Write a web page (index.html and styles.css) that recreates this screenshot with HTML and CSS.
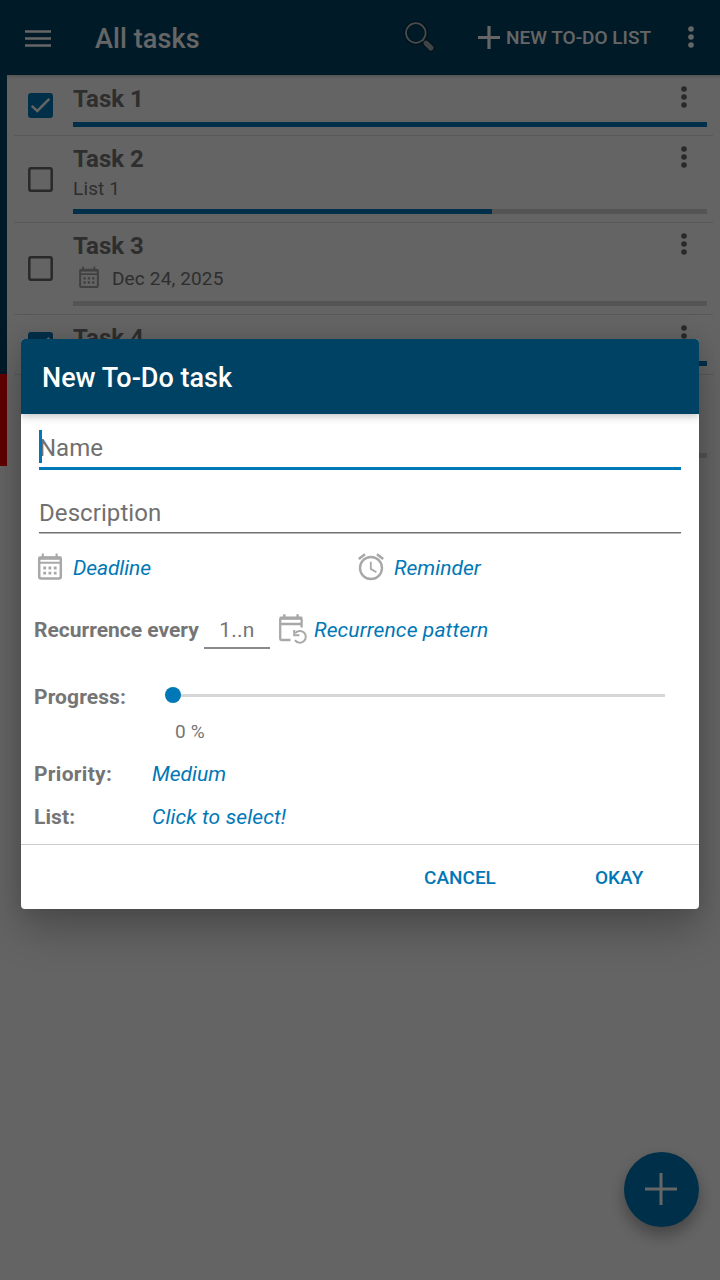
FILE: index.html
```
<!DOCTYPE html>
<html lang="en">
<head>
<meta charset="utf-8">
<title>All tasks</title>
<link rel="stylesheet" href="styles.css">
</head>
<body>
<svg class="defs" width="0" height="0">
  <symbol id="calendar" viewBox="0 0 26 28">
    <rect x="2.2" y="4.6" width="21.6" height="21" rx="2" fill="none" stroke="currentColor" stroke-width="2.5"/>
    <path d="M2 9.8h22M5.8 .5v4M19.6 .5v4" fill="none" stroke="currentColor" stroke-width="2.1"/>
    <path d="M1.5 3.6h23v3.2h-23z" fill="currentColor"/>
    <path d="M6.3 13.6h2.8v2.8H6.3zM11.5 13.6h2.8v2.8h-2.8zM16.8 13.6h2.8v2.8h-2.8zM6.3 18.7h2.8v2.8H6.3zM11.5 18.7h2.8v2.8h-2.8zM16.8 18.7h2.8v2.8h-2.8z" fill="currentColor"/>
  </symbol>
  <symbol id="dots" viewBox="0 0 6 22">
    <circle cx="3" cy="3" r="2.8"/><circle cx="3" cy="11" r="2.8"/><circle cx="3" cy="19" r="2.8"/>
  </symbol>
  <symbol id="checked" viewBox="0 0 25 25">
    <rect width="25" height="25" rx="3" fill="#0077b6"/>
    <path d="M3.7 12.8l5.6 5.2L21.3 5.8" fill="none" stroke="#fafafa" stroke-width="2.5"/>
  </symbol>
  <symbol id="unchecked" viewBox="0 0 25 25">
    <rect x="1.3" y="1.3" width="22.4" height="22.4" rx="1.7" fill="none" stroke="#666" stroke-width="2.5"/>
  </symbol>
</svg>
<div class="screen">
  <header class="appbar">
    <svg class="menu" width="26" height="17" viewBox="0 0 26 17"><path d="M0 1.4h26M0 8.4h26M0 15.4h26" stroke="#fff" stroke-width="2.5"/></svg>
    <h1 class="title">All tasks</h1>
    <svg class="search" width="32" height="32" viewBox="0 0 32 32">
      <circle cx="11.8" cy="12" r="10" fill="none" stroke="#002b40" stroke-width="4"/>
      <circle cx="11.8" cy="12" r="9.8" fill="none" stroke="#b4bcc0" stroke-width="1.8"/>
      <path d="M18.7 18.7l3 3" stroke="#b4bcc0" stroke-width="2"/>
      <path d="M22 22.2l5 4.8" stroke="#002b40" stroke-width="7" stroke-linecap="round"/>
      <path d="M22 22.2l5 4.8" stroke="#9eaab0" stroke-width="5.2" stroke-linecap="round"/>
    </svg>
    <svg class="plus" width="22" height="23" viewBox="0 0 22 23"><path d="M0 11.5h22M11 0v23" stroke="#fff" stroke-width="3.2"/></svg>
    <span class="newlist">NEW TO-DO LIST</span>
    <svg class="overflow" width="6" height="22" fill="#fff"><use href="#dots"/></svg>
  </header>
  <main class="body">
    <div class="strip"><div class="strip-normal"></div><div class="strip-due"></div></div>
    <div class="list">
      <section class="row row-1">
        <svg class="box" width="25" height="25"><use href="#checked"/></svg>
        <div class="info"><div class="name">Task 1</div><div class="bar"><div class="fill" style="width:100%"></div></div></div>
        <svg class="more" width="6" height="22" fill="#666"><use href="#dots"/></svg>
      </section>
      <section class="row row-2">
        <svg class="box" width="25" height="25"><use href="#unchecked"/></svg>
        <div class="info"><div class="name">Task 2</div><div class="sub">List 1</div><div class="bar"><div class="fill" style="width:66.1%"></div></div></div>
        <svg class="more" width="6" height="22" fill="#666"><use href="#dots"/></svg>
      </section>
      <section class="row row-3">
        <svg class="box" width="25" height="25"><use href="#unchecked"/></svg>
        <div class="info"><div class="name">Task 3</div><div class="date"><svg width="22" height="23"><use href="#calendar"/></svg><span>Dec 24, 2025</span></div><div class="bar"></div></div>
        <svg class="more" width="6" height="22" fill="#666"><use href="#dots"/></svg>
      </section>
      <section class="row row-4">
        <svg class="box" width="25" height="25"><use href="#checked"/></svg>
        <div class="info"><div class="name">Task 4</div><div class="bar"><div class="fill" style="width:100%"></div></div></div>
        <svg class="more" width="6" height="22" fill="#666"><use href="#dots"/></svg>
      </section>
      <section class="row row-5">
        <div class="info"><div class="bar"></div></div>
      </section>
    </div>
  </main>
  <div class="fab"><svg width="32" height="32" viewBox="0 0 32 32"><path d="M0 16h32M16 0v32" stroke="#fff" stroke-width="3"/></svg></div>
</div>
<div class="scrim">
  <div class="dialog">
    <h2 class="dialog-title">New To-Do task</h2>
    <div class="form">
      <div class="field field-name"><i class="caret"></i><span>Name</span></div>
      <div class="field field-desc"><span>Description</span></div>
      <div class="dates">
        <div class="pick"><svg width="26" height="28"><use href="#calendar"/></svg><a class="deadline">Deadline</a></div>
        <div class="pick">
          <svg width="26" height="28" viewBox="0 0 26 28" fill="none" stroke="currentColor"><circle cx="13" cy="15" r="11" stroke-width="2.4"/><path d="M12.8 8.7v7.2l5.6 3.3" stroke-width="1.8"/><path d="M.8 6l6.2-4.8M25.2 6L19 1.2" stroke-width="2.6"/></svg>
          <a>Reminder</a>
        </div>
      </div>
      <div class="recur">
        <b class="label every">Recurrence every</b>
        <span class="count">1..n</span>
        <svg width="29" height="30" viewBox="0 0 29 30" fill="none" stroke="currentColor"><path d="M12.5 26H3.4q-1.2 0-1.2-1.2V5.2q0-1.2 1.2-1.2h19q1.2 0 1.2 1.2V13.5M2.2 10h21.4" stroke-width="2.3"/><path d="M1.8 4.2h22.4" stroke-width="3.2"/><path d="M6.3 .3v4M19.6 .3v4" stroke-width="2.4"/><path d="M17.2 19.2a5.9 5.9 0 1 1-.2 6.9" stroke-width="2"/><path d="M16.2 16v5.2h5.2" stroke-width="2"/></svg>
        <a class="pattern">Recurrence pattern</a>
      </div>
      <div class="line line-progress"><b class="label">Progress:</b><div class="slider"><i class="thumb"></i></div></div>
      <div class="percent">0 %</div>
      <div class="line line-priority"><b class="label">Priority:</b><a>Medium</a></div>
      <div class="line line-list"><b class="label">List:</b><a class="pattern">Click to select!</a></div>
    </div>
    <footer class="actions"><span class="cancel">CANCEL</span><span class="okay">OKAY</span></footer>
  </div>
</div>
</body>
</html>
```
FILE: styles.css
```
* { box-sizing: border-box; }
html, body { margin: 0; height: 1280px; overflow: hidden; }
body { position: relative; width: 720px; font-family: Roboto, sans-serif; background: #fafafa; }
svg { display: block; flex: none; }
h1, h2 { margin: 0; font-weight: 500; }
.defs { position: absolute; }
.screen { height: 1280px; background: #fafafa; }

.appbar { height: 75px; display: flex; align-items: center; background: #004264; color: #fff; padding-left: 25px; position: relative; box-shadow: 7px 1px 4px rgba(0,0,0,.25); white-space: nowrap; }
.menu { margin-top: 1px; }
.title { width: 309px; margin-left: 44px; font-size: 27px; line-height: 36px; margin-top: 3px; letter-spacing: .1px; }
.search { margin-top: -1px; }
.plus { margin-left: 42px; margin-top: -1px; }
.newlist { width: 146px; margin-left: 6px; font-size: 19px; font-weight: 500; }
.overflow { margin-left: 36px; margin-top: -1px; }

.body { display: flex; height: 391px; }
.strip { width: 7px; position: relative; }
.strip-normal { height: 299px; background: #004264; }
.strip-due { height: 92px; background: #f00000; }
.list { width: 699px; margin-left: 7px; }
.row { display: flex; position: relative; border-bottom: 1px solid #dcdcdc; }
.row-1 { height: 61px; }
.row-2 { height: 87px; }
.row-3 { height: 92px; }
.row-4 { height: 60px; }
.row-5 { height: 91px; border: 0; }
.box { margin-left: 14px; margin-top: 18px; }
.row-2 .box { margin-top: 31px; }
.row-3 .box { margin-top: 33px; }
.row-4 .box { margin-top: 17px; }
.info { display: flex; flex-direction: column; width: 634px; margin-left: 20px; padding-bottom: 8px; }
.row-5 .info { margin-left: 59px; }
.name { font-size: 24px; line-height: 28px; padding-top: 10px; font-weight: 700; color: #747474; }
.row-2 .name, .row-3 .name, .row-4 .name { padding-top: 9px; }
.sub { font-size: 19px; line-height: 22px; margin-top: 5px; color: #747474; letter-spacing: .15px; }
.date { display: flex; align-items: center; height: 28px; gap: 12px; margin: 4px 0 0 5px; font-size: 19px; color: #747474; letter-spacing: .15px; }
.date svg { color: #a2a2a2; margin-top: -2px; }
.bar { height: 5px; margin-top: auto; background: #d2d2d2; }
.fill { height: 5px; background: #0077b6; }
.more { position: absolute; right: 26px; top: 10px; }
.row-1 .more { top: 11px; }
.fab { position: absolute; left: 624px; top: 1152px; width: 75px; height: 75px; border-radius: 50%; background: #0077b6; display: grid; place-items: center; padding: 0 1px 1px 0; box-shadow: 0 8px 16px rgba(0,0,0,.32); }

.scrim { position: absolute; inset: 0; background: rgba(0,0,0,.6); padding: 339px 21px 0; }
.dialog { height: 570px; background: #fff; border-radius: 4px; box-shadow: 0 20px 40px rgba(0,0,0,.25), 0 0 18px rgba(0,0,0,.1); overflow: hidden; color: #757575; white-space: nowrap; }
.dialog-title { height: 75px; line-height: 78px; padding-left: 21px; font-size: 27px; color: #fff; background: #004264; position: relative; box-shadow: 0 2px 8px rgba(0,0,0,.25); }
.form { height: 430px; padding: 16px 13px 0; }
.field { margin: 0 5px; font-size: 24px; color: #707070; }
.field-name { height: 40px; line-height: 36px; border-bottom: 3px solid #0077b6; position: relative; }
.caret { position: absolute; left: 0; top: 0; width: 3px; height: 33px; background: #0077b6; }
.field-desc { height: 64px; line-height: 28px; padding-top: 29px; letter-spacing: .08px; background: linear-gradient(#707070, #707070) 0 62px / 100% 1px no-repeat, linear-gradient(#b8b8b8, #b8b8b8) 0 63px / 100% 1px no-repeat; }
a { color: #0077b6; font-style: italic; font-size: 21px; line-height: 26px; }
.dates { display: flex; margin: 19px 0 0 3px; }
.pick { width: 321px; display: flex; gap: 10px; color: #a8a8a8; }
.pick a { margin-top: 2px; }
.deadline { letter-spacing: -.1px; }
.recur { display: flex; height: 40px; margin-top: 29px; }
.recur svg { margin: 4px 7px 0 8px; color: #a8a8a8; }
.recur a { margin-top: 7px; }
.pattern { letter-spacing: .12px; }
.label { font-size: 21px; line-height: 26px; font-weight: 700; letter-spacing: .1px; }
.every { width: 170px; margin-top: 7px; letter-spacing: 0; }
.count { width: 66px; text-align: center; font-size: 21px; line-height: 26px; padding-top: 7px; height: 39px; border-bottom: 2px solid #8a8a8a; letter-spacing: .2px; }
.line { display: flex; }
.line .label { width: 118px; }
.line-progress { margin-top: 34px; }
.slider { width: 492px; height: 3px; margin: 10px 0 0 21px; background: #d6d6d6; position: relative; }
.thumb { position: absolute; left: -8px; top: -7px; width: 16px; height: 16px; border-radius: 50%; background: #0077b6; }
.percent { margin: 11px 0 0 141px; font-size: 19px; line-height: 22px; letter-spacing: .15px; }
.line-priority { margin-top: 18px; }
.line-priority .label { letter-spacing: .3px; }
.line-list { margin-top: 17px; }
.actions { height: 65px; border-top: 1px solid #ccc; display: flex; align-items: center; color: #0077b6; font-size: 19px; font-weight: 500; }
.cancel { width: 71px; margin-left: 403px; }
.okay { margin-left: 100px; }
```
